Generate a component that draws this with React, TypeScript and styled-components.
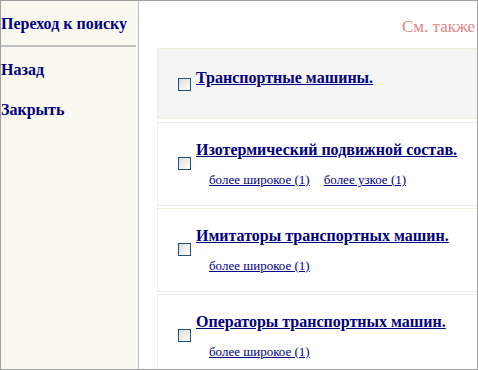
import React from 'react'
import styled, { createGlobalStyle } from 'styled-components'

const GlobalStyle = createGlobalStyle`
  html, body {
    margin: 0;
    padding: 0;
    background: #ffffff;
  }
  body {
    font-family: "Liberation Serif", "Times New Roman", serif;
  }
`

const Frame = styled.div`
  box-sizing: border-box;
  width: 478px;
  height: 370px;
  border: 1px solid #a0a0a0;
  display: flex;
  overflow: hidden;
`

const Sidebar = styled.div`
  width: 137px;
  flex-shrink: 0;
  background: #f9f9f0;
  border-right: 1px solid #c0c0c0;
  display: flex;
  flex-direction: column;
`

const SideLink = styled.a<{ $first?: boolean }>`
  display: block;
  padding: ${({ $first }) => ($first ? '14px 0 0 0' : '0')};
  margin-bottom: ${({ $first }) => ($first ? '0' : '22px')};
  font-size: 16px;
  font-weight: bold;
  line-height: 18px;
  color: #000080;
  text-decoration: none;
  white-space: nowrap;
`

const Divider = styled.div`
  height: 2px;
  width: 135px;
  background: #c0c0c0;
  margin: 12px 0 14px 0;
`

const Main = styled.div`
  flex: 1;
  min-width: 0;
  display: flex;
  flex-direction: column;
  overflow: hidden;
`

const SeeAlso = styled.div`
  flex-shrink: 0;
  padding: 16px 0 0 263px;
  height: 31px;
  font-size: 17px;
  line-height: 19px;
  color: #e08585;
  white-space: nowrap;
`

const List = styled.div`
  flex-shrink: 0;
  margin-left: 18px;
  width: 420px;
  display: flex;
  flex-direction: column;
`

const Card = styled.div<{ $root?: boolean }>`
  flex-shrink: 0;
  display: flex;
  align-items: center;
  background: ${({ $root }) => ($root ? '#f5f5f5' : '#ffffff')};
  border: 1px solid #efeee0;
  padding: ${({ $root }) => ($root ? '17px 0 18px 20px' : '15px 0 18px 20px')};
  margin-bottom: ${({ $root }) => ($root ? '3px' : '2px')};
`

const Check = styled.span`
  box-sizing: border-box;
  width: 13px;
  height: 13px;
  flex-shrink: 0;
  border: 1px solid #1c5180;
  background: linear-gradient(135deg, #dcdcd7 0%, #f2f2ef 60%, #ffffff 100%);
  margin: 2px 5px 0 0;
`

const Body = styled.div`
  display: flex;
  flex-direction: column;
`

const Title = styled.a`
  display: block;
  font-size: 16px;
  font-weight: bold;
  line-height: 24px;
  color: #000080;
  text-decoration: underline;
  white-space: nowrap;
  margin-bottom: 10px;
`

const Relations = styled.div`
  display: flex;
  gap: 14px;
  padding-left: 13px;
  line-height: 15px;
`

const Relation = styled.a`
  font-size: 13px;
  color: #000080;
  text-decoration: underline;
  white-space: nowrap;
`

type Term = {
  title: string
  root?: boolean
  links: string[]
}

const terms: Term[] = [
  { title: 'Транспортные машины.', root: true, links: [] },
  { title: 'Изотермический подвижной состав.', links: ['более широкое (1)', 'более узкое (1)'] },
  { title: 'Имитаторы транспортных машин.', links: ['более широкое (1)'] },
  { title: 'Операторы транспортных машин.', links: ['более широкое (1)'] }
]

const App = () => {
  return (
    <>
      <GlobalStyle />
      <Frame>
        <Sidebar>
          <SideLink href='#' $first>Переход к поиску</SideLink>
          <Divider />
          <SideLink href='#'>Назад</SideLink>
          <SideLink href='#'>Закрыть</SideLink>
        </Sidebar>

        <Main>
          <SeeAlso>См. также</SeeAlso>
          <List>
            {terms.map((term) => (
              <Card key={term.title} $root={term.root}>
                <Check />
                <Body>
                  <Title href='#'>{term.title}</Title>
                  {term.links.length > 0 && (
                    <Relations>
                      {term.links.map((link) => (
                        <Relation href='#' key={link}>{link}</Relation>
                      ))}
                    </Relations>
                  )}
                </Body>
              </Card>
            ))}
          </List>
        </Main>
      </Frame>
    </>
  )
}

export default App
